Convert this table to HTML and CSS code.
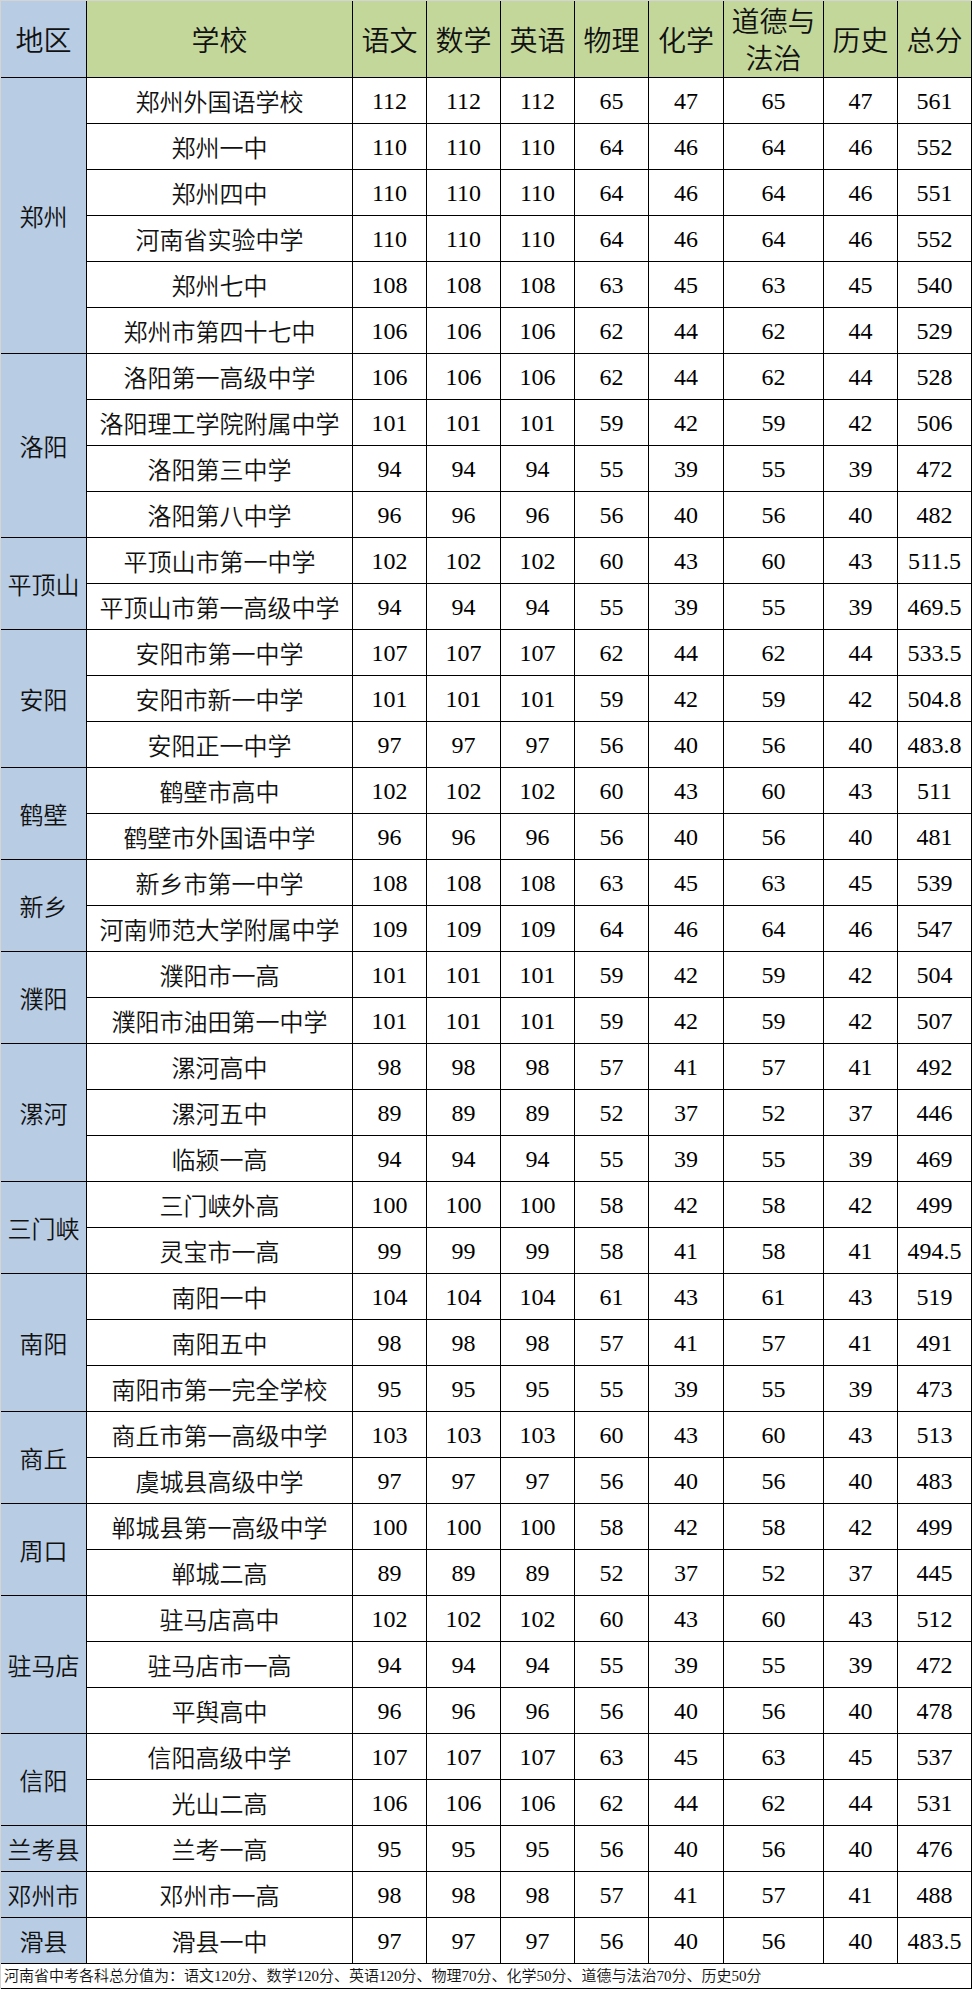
FILE: index.html
```html
<!DOCTYPE html>
<html lang="zh-CN">
<head>
<meta charset="utf-8">
<title>河南省中考各科总分</title>
<link rel="stylesheet" href="styles.css">
</head>
<body>
<div class="sheet">
<table class="grid">
<colgroup>
<col class="c-region"><col class="c-school"><col class="c-n"><col class="c-n"><col class="c-n"><col class="c-n"><col class="c-n5"><col class="c-law"><col class="c-n"><col class="c-n">
</colgroup>
<thead>
<tr class="head">
<th class="h-region">地区</th><th>学校</th><th>语文</th><th>数学</th><th>英语</th><th>物理</th><th>化学</th><th class="h-law">道德与<br>法治</th><th>历史</th><th>总分</th>
</tr>
</thead>
<tbody>
<tr><td class="region" rowspan="6">郑州</td><td class="school">郑州外国语学校</td><td>112</td><td>112</td><td>112</td><td>65</td><td>47</td><td>65</td><td>47</td><td>561</td></tr>
<tr><td class="school">郑州一中</td><td>110</td><td>110</td><td>110</td><td>64</td><td>46</td><td>64</td><td>46</td><td>552</td></tr>
<tr><td class="school">郑州四中</td><td>110</td><td>110</td><td>110</td><td>64</td><td>46</td><td>64</td><td>46</td><td>551</td></tr>
<tr><td class="school">河南省实验中学</td><td>110</td><td>110</td><td>110</td><td>64</td><td>46</td><td>64</td><td>46</td><td>552</td></tr>
<tr><td class="school">郑州七中</td><td>108</td><td>108</td><td>108</td><td>63</td><td>45</td><td>63</td><td>45</td><td>540</td></tr>
<tr><td class="school">郑州市第四十七中</td><td>106</td><td>106</td><td>106</td><td>62</td><td>44</td><td>62</td><td>44</td><td>529</td></tr>

<tr><td class="region" rowspan="4">洛阳</td><td class="school">洛阳第一高级中学</td><td>106</td><td>106</td><td>106</td><td>62</td><td>44</td><td>62</td><td>44</td><td>528</td></tr>
<tr><td class="school">洛阳理工学院附属中学</td><td>101</td><td>101</td><td>101</td><td>59</td><td>42</td><td>59</td><td>42</td><td>506</td></tr>
<tr><td class="school">洛阳第三中学</td><td>94</td><td>94</td><td>94</td><td>55</td><td>39</td><td>55</td><td>39</td><td>472</td></tr>
<tr><td class="school">洛阳第八中学</td><td>96</td><td>96</td><td>96</td><td>56</td><td>40</td><td>56</td><td>40</td><td>482</td></tr>

<tr><td class="region" rowspan="2">平顶山</td><td class="school">平顶山市第一中学</td><td>102</td><td>102</td><td>102</td><td>60</td><td>43</td><td>60</td><td>43</td><td>511.5</td></tr>
<tr><td class="school">平顶山市第一高级中学</td><td>94</td><td>94</td><td>94</td><td>55</td><td>39</td><td>55</td><td>39</td><td>469.5</td></tr>

<tr><td class="region" rowspan="3">安阳</td><td class="school">安阳市第一中学</td><td>107</td><td>107</td><td>107</td><td>62</td><td>44</td><td>62</td><td>44</td><td>533.5</td></tr>
<tr><td class="school">安阳市新一中学</td><td>101</td><td>101</td><td>101</td><td>59</td><td>42</td><td>59</td><td>42</td><td>504.8</td></tr>
<tr><td class="school">安阳正一中学</td><td>97</td><td>97</td><td>97</td><td>56</td><td>40</td><td>56</td><td>40</td><td>483.8</td></tr>

<tr><td class="region" rowspan="2">鹤壁</td><td class="school">鹤壁市高中</td><td>102</td><td>102</td><td>102</td><td>60</td><td>43</td><td>60</td><td>43</td><td>511</td></tr>
<tr><td class="school">鹤壁市外国语中学</td><td>96</td><td>96</td><td>96</td><td>56</td><td>40</td><td>56</td><td>40</td><td>481</td></tr>

<tr><td class="region" rowspan="2">新乡</td><td class="school">新乡市第一中学</td><td>108</td><td>108</td><td>108</td><td>63</td><td>45</td><td>63</td><td>45</td><td>539</td></tr>
<tr><td class="school">河南师范大学附属中学</td><td>109</td><td>109</td><td>109</td><td>64</td><td>46</td><td>64</td><td>46</td><td>547</td></tr>

<tr><td class="region" rowspan="2">濮阳</td><td class="school">濮阳市一高</td><td>101</td><td>101</td><td>101</td><td>59</td><td>42</td><td>59</td><td>42</td><td>504</td></tr>
<tr><td class="school">濮阳市油田第一中学</td><td>101</td><td>101</td><td>101</td><td>59</td><td>42</td><td>59</td><td>42</td><td>507</td></tr>

<tr><td class="region" rowspan="3">漯河</td><td class="school">漯河高中</td><td>98</td><td>98</td><td>98</td><td>57</td><td>41</td><td>57</td><td>41</td><td>492</td></tr>
<tr><td class="school">漯河五中</td><td>89</td><td>89</td><td>89</td><td>52</td><td>37</td><td>52</td><td>37</td><td>446</td></tr>
<tr><td class="school">临颍一高</td><td>94</td><td>94</td><td>94</td><td>55</td><td>39</td><td>55</td><td>39</td><td>469</td></tr>

<tr><td class="region" rowspan="2">三门峡</td><td class="school">三门峡外高</td><td>100</td><td>100</td><td>100</td><td>58</td><td>42</td><td>58</td><td>42</td><td>499</td></tr>
<tr><td class="school">灵宝市一高</td><td>99</td><td>99</td><td>99</td><td>58</td><td>41</td><td>58</td><td>41</td><td>494.5</td></tr>

<tr><td class="region" rowspan="3">南阳</td><td class="school">南阳一中</td><td>104</td><td>104</td><td>104</td><td>61</td><td>43</td><td>61</td><td>43</td><td>519</td></tr>
<tr><td class="school">南阳五中</td><td>98</td><td>98</td><td>98</td><td>57</td><td>41</td><td>57</td><td>41</td><td>491</td></tr>
<tr><td class="school">南阳市第一完全学校</td><td>95</td><td>95</td><td>95</td><td>55</td><td>39</td><td>55</td><td>39</td><td>473</td></tr>

<tr><td class="region" rowspan="2">商丘</td><td class="school">商丘市第一高级中学</td><td>103</td><td>103</td><td>103</td><td>60</td><td>43</td><td>60</td><td>43</td><td>513</td></tr>
<tr><td class="school">虞城县高级中学</td><td>97</td><td>97</td><td>97</td><td>56</td><td>40</td><td>56</td><td>40</td><td>483</td></tr>

<tr><td class="region" rowspan="2">周口</td><td class="school">郸城县第一高级中学</td><td>100</td><td>100</td><td>100</td><td>58</td><td>42</td><td>58</td><td>42</td><td>499</td></tr>
<tr><td class="school">郸城二高</td><td>89</td><td>89</td><td>89</td><td>52</td><td>37</td><td>52</td><td>37</td><td>445</td></tr>

<tr><td class="region" rowspan="3">驻马店</td><td class="school">驻马店高中</td><td>102</td><td>102</td><td>102</td><td>60</td><td>43</td><td>60</td><td>43</td><td>512</td></tr>
<tr><td class="school">驻马店市一高</td><td>94</td><td>94</td><td>94</td><td>55</td><td>39</td><td>55</td><td>39</td><td>472</td></tr>
<tr><td class="school">平舆高中</td><td>96</td><td>96</td><td>96</td><td>56</td><td>40</td><td>56</td><td>40</td><td>478</td></tr>

<tr><td class="region" rowspan="2">信阳</td><td class="school">信阳高级中学</td><td>107</td><td>107</td><td>107</td><td>63</td><td>45</td><td>63</td><td>45</td><td>537</td></tr>
<tr><td class="school">光山二高</td><td>106</td><td>106</td><td>106</td><td>62</td><td>44</td><td>62</td><td>44</td><td>531</td></tr>

<tr><td class="region">兰考县</td><td class="school">兰考一高</td><td>95</td><td>95</td><td>95</td><td>56</td><td>40</td><td>56</td><td>40</td><td>476</td></tr>
<tr><td class="region">邓州市</td><td class="school">邓州市一高</td><td>98</td><td>98</td><td>98</td><td>57</td><td>41</td><td>57</td><td>41</td><td>488</td></tr>
<tr><td class="region">滑县</td><td class="school">滑县一中</td><td>97</td><td>97</td><td>97</td><td>56</td><td>40</td><td>56</td><td>40</td><td>483.5</td></tr>
</tbody>
<tfoot>
<tr class="foot"><td colspan="10">河南省中考各科总分值为：语文120分、数学120分、英语120分、物理70分、化学50分、道德与法治70分、历史50分</td></tr>
</tfoot>
</table>
</div>
</body>
</html>
```

FILE: styles.css
```css
html, body {
  margin: 0;
  padding: 0;
  background: #ffffff;
}

.sheet {
  width: 971px;
  border-top: 1px solid #d4d4d4;
  border-left: 1px solid #d4d4d4;
}

.grid {
  width: 971px;
  table-layout: fixed;
  border-collapse: separate;
  border-spacing: 0;
  font-family: "Liberation Serif", "Noto Sans CJK SC", serif;
  color: #000;
}

.c-region { width: 86px; }
.c-school { width: 266px; }
.c-n { width: 74px; }
.c-n5 { width: 75px; }
.c-law { width: 100px; }

.grid th,
.grid td {
  box-sizing: border-box;
  padding: 0;
  border-right: 1px solid #000;
  border-bottom: 1px solid #000;
  text-align: center;
  vertical-align: middle;
  white-space: nowrap;
}

.head th {
  height: 77px;
  background: #c4d79b;
  font-family: "Noto Sans CJK SC", sans-serif;
  font-weight: 350;
  font-size: 28px;
  line-height: 1.3;
  color: #111;
}

.head .h-region {
  background: #b8cce4;
}

.head .h-law {
  line-height: 37px;
}

.grid tbody td {
  height: 46px;
  font-size: 24px;
  line-height: 1;
}

.grid tbody td.region {
  background: #b8cce4;
  font-family: "Noto Sans CJK SC", sans-serif;
  font-weight: 350;
  color: #111;
}

.grid tbody td.school {
  font-family: "Noto Sans CJK SC", sans-serif;
  font-weight: 350;
  color: #111;
}

.foot td {
  height: 25px;
  text-align: left;
  padding-left: 3px;
  font-family: "Liberation Serif", "Noto Sans CJK SC", serif;
  font-size: 15px;
  font-weight: 350;
  line-height: 1;
  color: #111;
}
```
